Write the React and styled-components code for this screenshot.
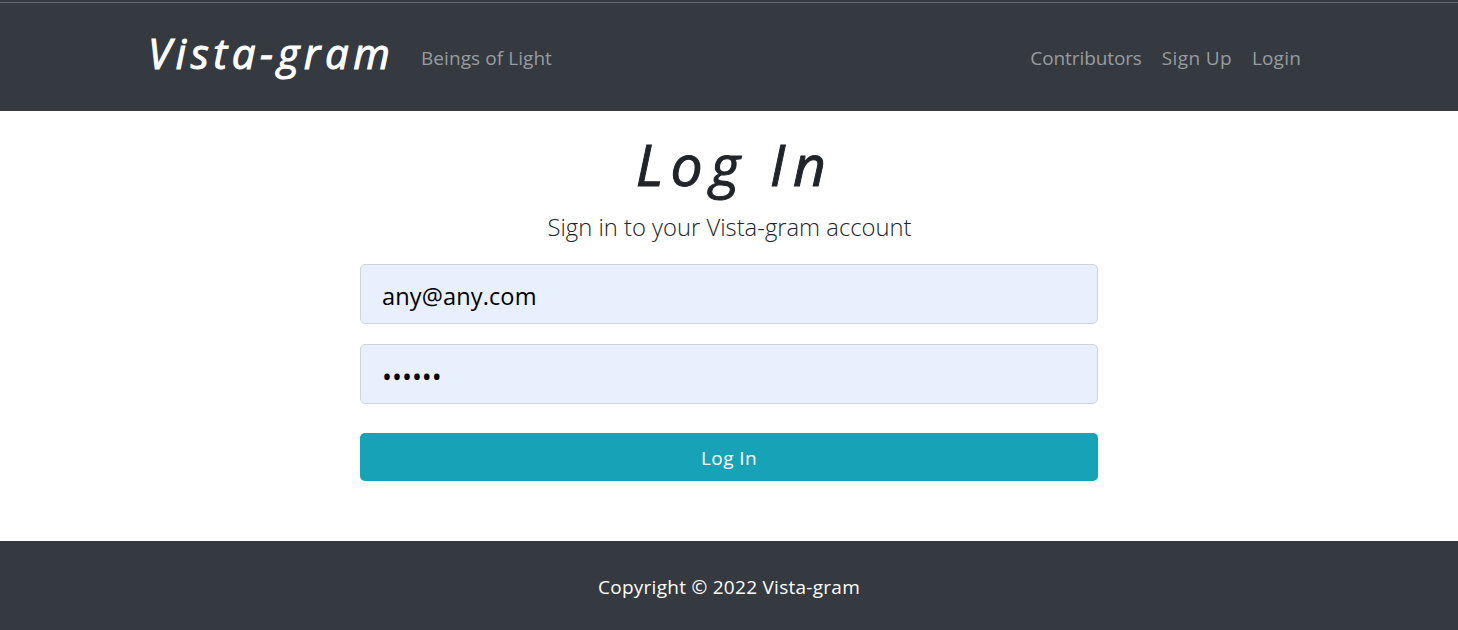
import React from "react";
import styled, { createGlobalStyle } from "styled-components";

const GlobalStyle = createGlobalStyle`
  *, *::before, *::after { box-sizing: border-box; }
  body {
    margin: 0;
    background: #fff;
    color: #212529;
    font-family: "Segoe UI", "Open Sans", "Noto Sans", sans-serif;
    font-size: 19px;
    line-height: 30px;
  }
`;

const Page = styled.div`
  min-height: 630px;
  display: flex;
  flex-direction: column;
`;

const Navbar = styled.header`
  height: 111px;
  flex: none;
  background: linear-gradient(#343a40 2px, #67686a 2px, #67686a 3px, #343a40 3px);
  padding: 5px 148px 0;
  display: flex;
  align-items: center;
`;

const Brand = styled.a`
  width: 273px;
  color: #fff;
  font-family: "Segoe Print", "Bradley Hand", "Open Sans", cursive;
  font-size: 42px;
  font-style: italic;
  font-weight: 500;
  -webkit-text-stroke: 1px currentColor;
  line-height: 60px;
  letter-spacing: 4.5px;
  white-space: nowrap;
  padding-bottom: 11px;
`;

const NavLinks = styled.nav`
  display: flex;
  gap: 20px;
  margin-left: ${(p) => (p.$end ? "auto" : "0")};
  padding: 0 9px 0 0;
`;

const NavLink = styled.a`
  color: #999c9f;
  white-space: nowrap;
  letter-spacing: ${(p) => p.$track || 0}px;
`;

const Main = styled.main`
  width: 738px;
  margin: 0 auto;
  flex: 1;
  display: flex;
  flex-direction: column;
`;

const Title = styled.h1`
  margin: 18px 0 0 11px;
  height: 80px;
  text-align: center;
  font-family: "Segoe Print", "Bradley Hand", "Open Sans", cursive;
  font-size: 57px;
  font-style: italic;
  font-weight: 500;
  -webkit-text-stroke: 1px currentColor;
  line-height: 70px;
  letter-spacing: 7.6px;
`;

const Lead = styled.p`
  margin: 0 0 18px 1px;
  height: 37px;
  text-align: center;
  font-size: 23.8px;
  font-weight: 300;
  line-height: 37px;
`;

const Field = styled.input`
  display: block;
  width: 100%;
  height: 60px;
  margin: 0 0 20px;
  padding: 12px 20px 8px 21px;
  border: 1px solid #ced4da;
  border-radius: 5px;
  background: #e8f0fe;
  color: #000;
  font-family: inherit;
  font-size: 23.6px;
  letter-spacing: ${(p) => p.$track || 0}px;
  outline: none;
`;

const PasswordField = styled(Field)`
  padding-top: 14px;
  font-size: 26.5px;
`;

const SubmitButton = styled.button`
  height: 48px;
  margin-top: 9px;
  padding: 2px 0 0;
  border: 0;
  border-radius: 5px;
  background: #17a2b8;
  color: #fff;
  font-family: inherit;
  font-size: 19px;
  letter-spacing: 0.4px;
`;

const Footer = styled.footer`
  height: 89px;
  flex: none;
  padding-top: 31px;
  background: #343a40;
  color: #fff;
  text-align: center;
  letter-spacing: 0.27px;
`;

export default function App() {
  return (
    <Page>
      <GlobalStyle />
      <Navbar>
        <Brand>Vista-gram</Brand>
        <NavLinks>
          <NavLink $track={0.07}>Beings of Light</NavLink>
        </NavLinks>
        <NavLinks $end>
          <NavLink $track={-0.1}>Contributors</NavLink>
          <NavLink $track={0.35}>Sign Up</NavLink>
          <NavLink $track={0.2}>Login</NavLink>
        </NavLinks>
      </Navbar>
      <Main>
        <Title>Log In</Title>
        <Lead>Sign in to your Vista-gram account</Lead>
        <Field type="text" defaultValue="any@any.com" $track={0.1} />
        <PasswordField type="password" defaultValue="secret" />
        <SubmitButton>Log In</SubmitButton>
      </Main>
      <Footer>Copyright © 2022 Vista-gram</Footer>
    </Page>
  );
}
